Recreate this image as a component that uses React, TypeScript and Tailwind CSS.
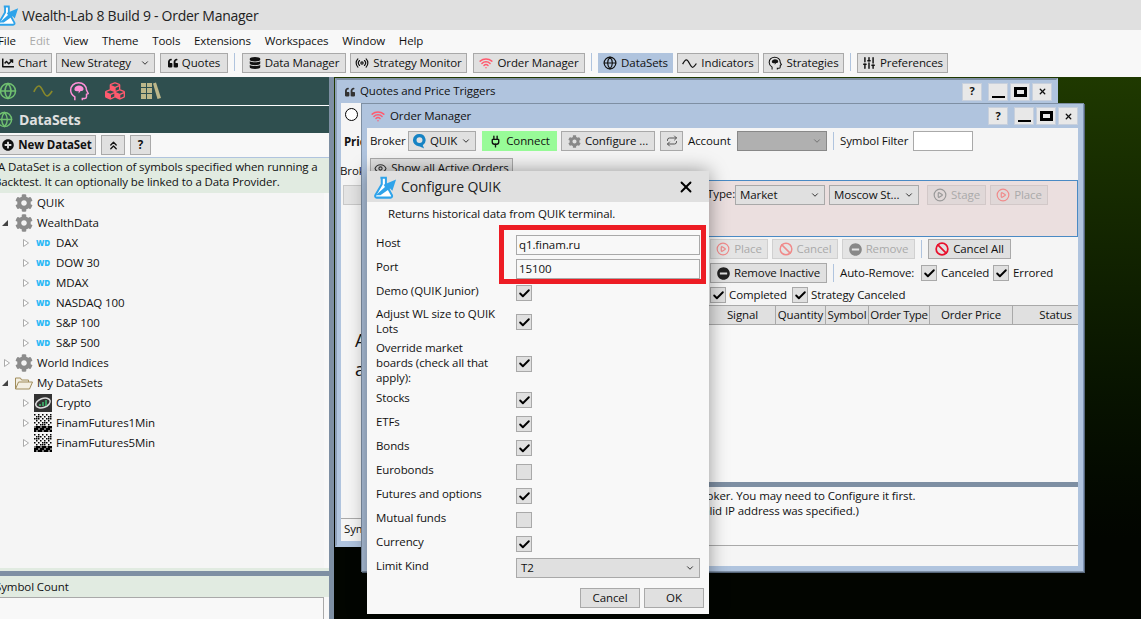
import type { ReactNode } from "react"
import { twMerge } from "tailwind-merge"
import {
  Ban,
  Check,
  ChevronDown,
  ChevronsUp,
  CirclePlay,
  Eye,
  Globe,
  Plug,
  Radio,
  Repeat,
  SlidersVertical,
  Wifi,
  X,
} from "lucide-react"
import { FaCog, FaCubes, FaDatabase, FaMinusCircle, FaPlusCircle, FaQuoteLeft, FaChartLine } from "react-icons/fa"

function Flask({ className }: { className: string }) {
  return (
    <svg viewBox="0 0 26 26" className={className}>
      <path d="M8 3h7M9.500 3v7L2.500 22c-.6 1.200 0 2.500 1.500 2.500h15c1.500 0 2.100-1.300 1.500-2.500L14 10V3" fill="#fff" stroke="#2ea3ea" strokeWidth="2.200" strokeLinejoin="round" />
      <path d="M3 22 13 13l-1.500-2.500L25 5l-4 12-2.500-2.500L8 22z" fill="#2ea3ea" />
    </svg>
  )
}

function Sine({ className }: { className: string }) {
  return (
    <svg viewBox="0 0 24 24" className={className} fill="none" stroke="currentColor" strokeWidth="2">
      <path d="M1 13c2-4 4-7 6-7s3 2 5 6 3 6 5 6 4-3 6-6" />
    </svg>
  )
}

function Head({ className }: { className: string }) {
  return (
    <svg viewBox="0 0 24 24" className={className} fill="none" stroke="currentColor" strokeWidth="1.800">
      <path d="M7 23v-4c-3-2-5-5-5-8 0-5 4-9 9.500-9S21 6 21 11l2 4-2 1v3c0 1-1 2-2 2h-3v2" />
      <path d="M6.500 10c0-3 3-4.500 5.500-4.500s5.500 1.500 5.500 4c0 2-2 2.500-3.500 2.500l-2.500 3v-3c-3 1-5 0-5-2z" fill="currentColor" stroke="none" />
    </svg>
  )
}

function Books({ className }: { className: string }) {
  return (
    <svg viewBox="0 0 20 20" className={className} fill="currentColor">
      <rect x="0" y="2" width="5" height="16" />
      <rect x="6" y="2" width="5" height="16" />
      <path d="M12 2.500 15 1.500 20 17l-3.500 1z" />
      <path d="M0 6h5v1H0zM0 12h5v1H0zM6 6h5v1H6zM6 12h5v1H6z" fill="#2f4f4f" />
    </svg>
  )
}

function QuikLogo() {
  return (
    <svg viewBox="0 0 14 16" className="h-[15px] w-[13px] shrink-0">
      <path d="M7 0a6.500 6.500 0 0 0-1 13c2 .3 4 1.500 6 2.500L10.500 12A6.500 6.500 0 0 0 7 0z" fill="#1583c4" />
      <circle cx="7" cy="6.500" r="3.200" fill="#e0e0e0" />
    </svg>
  )
}

function Btn({ children, className = "" }: { children: ReactNode; className?: string }) {
  return (
    <div className={twMerge("flex h-[20px] shrink-0 items-center justify-center gap-[4px] border border-[#a9a9a9] bg-[#e0e0e0] whitespace-nowrap text-[#111]", className)}>
      {children}
    </div>
  )
}

function Combo({ children, className = "" }: { children?: ReactNode; className?: string }) {
  return (
    <div className={twMerge("flex h-[20px] shrink-0 items-center justify-between border border-[#a9a9a9] bg-[#e0e0e0] pr-[4px] pl-[4px] whitespace-nowrap", className)}>
      <span className="flex items-center gap-[4px]">{children}</span>
      <ChevronDown className="size-[10px]" strokeWidth={2} />
    </div>
  )
}

function Sep() {
  return <div className="h-[18px] w-px shrink-0 bg-[#b0c4de]" />
}

function CheckBox({ on = true }: { on?: boolean }) {
  return (
    <div className="flex size-[16px] shrink-0 items-center justify-center border border-[#a9a9a9] bg-[#e0e0e0]">
      {on && <Check className="size-[13px] text-black" strokeWidth={3.500} />}
    </div>
  )
}

function WinButtons() {
  return (
    <div className="flex items-center">
      <div className="mr-[6px] flex h-[18px] w-[20px] items-center justify-center border border-[#c8d0dc] bg-[#e8e8e8] text-[11px] font-bold">?</div>
      <div className="mr-[2px] flex h-[18px] w-[20px] items-end justify-center border border-[#c8d0dc] bg-[#e8e8e8] pb-[2px]">
        <div className="h-[2px] w-[13px] bg-black" />
      </div>
      <div className="mr-[2px] flex h-[18px] w-[20px] items-center justify-center border border-[#c8d0dc] bg-[#e8e8e8]">
        <div className="h-[10px] w-[13px] border-[3px] border-black" />
      </div>
      <div className="flex h-[18px] w-[20px] items-center justify-center border border-[#c8d0dc] bg-[#e8e8e8]">
        <X className="size-[9px]" strokeWidth={3.500} />
      </div>
    </div>
  )
}

function Triangle({ open = false }: { open?: boolean }) {
  return open ? (
    <svg viewBox="0 0 6 6" className="size-[6px] shrink-0">
      <path d="M0 6h6V0z" fill="#444" />
    </svg>
  ) : (
    <svg viewBox="0 0 6 8" className="h-[8px] w-[6px] shrink-0">
      <path d="M.5.5v7l5-3.500z" fill="#fff" stroke="#aaa" />
    </svg>
  )
}

function Dither() {
  const cells: ReactNode[] = []
  for (let y = 0; y < 18; y += 2) {
    for (let x = 0; x < 18; x += 2) {
      if (y > 11 || (x + y) % 4 === 0 || (x * y) % 6 === 2) {
        cells.push(<rect key={`${x}-${y}`} x={x} y={y} width={y > 11 ? 2 : 1.500} height={y > 11 ? 2 : 1.500} fill={y > 11 && (x + y) % 6 === 0 ? "#777" : "#000"} />)
      }
    }
  }
  return (
    <svg viewBox="0 0 18 18" className="size-[18px] shrink-0">
      {cells}
    </svg>
  )
}

function CryptoIcon() {
  return (
    <svg viewBox="0 0 18 18" className="size-[18px] shrink-0">
      <rect width="18" height="18" fill="#333" />
      <ellipse cx="9" cy="9" rx="7.500" ry="4.500" fill="none" stroke="#ddd" strokeWidth="1.500" transform="rotate(-20 9 9)" />
      <path d="M6 12v-2M9 12V8M12 12V6" stroke="#3fbf6f" strokeWidth="1.500" />
    </svg>
  )
}

function Gear() {
  return <FaCog className="size-[18px] shrink-0 text-[#8c8c8c]" />
}

function WdRow({ name }: { name: string }) {
  return (
    <div className="flex h-[20px] items-center pl-[23px]">
      <Triangle />
      <span className="ml-[7px] w-[20px] shrink-0 text-[8px] leading-none font-extrabold text-[#2ab8f5]">WD</span>
      <span>{name}</span>
    </div>
  )
}

function Tree() {
  return (
    <div className="flex-1 bg-[#f5f5f5]">
      <div className="flex h-[20px] items-center pl-[15px]">
        <Gear />
        <span className="ml-[4px]">QUIK</span>
      </div>
      <div className="flex h-[20px] items-center pl-[2px]">
        <Triangle open />
        <span className="ml-[7px]"><Gear /></span>
        <span className="ml-[4px]">WealthData</span>
      </div>
      {["DAX", "DOW 30", "MDAX", "NASDAQ 100", "S&P 100", "S&P 500"].map((n) => (
        <WdRow key={n} name={n} />
      ))}
      <div className="flex h-[20px] items-center pl-[4px]">
        <Triangle />
        <span className="ml-[5px]"><Gear /></span>
        <span className="ml-[4px]">World Indices</span>
      </div>
      <div className="flex h-[20px] items-center pl-[2px]">
        <Triangle open />
        <svg viewBox="0 0 18 14" className="ml-[7px] h-[14px] w-[18px] shrink-0" fill="#f3efe3" stroke="#a08c5a">
          <path d="M.5 13V2h5l1 2h7v2M.5 13l3-7h14l-3 7z" />
        </svg>
        <span className="ml-[4px]">My DataSets</span>
      </div>
      <div className="flex h-[20px] items-center pl-[23px]">
        <Triangle />
        <span className="ml-[5px]"><CryptoIcon /></span>
        <span className="ml-[4px]">Crypto</span>
      </div>
      <div className="flex h-[20px] items-center pl-[23px]">
        <Triangle />
        <span className="ml-[5px]"><Dither /></span>
        <span className="ml-[4px]">FinamFutures1Min</span>
      </div>
      <div className="flex h-[20px] items-center pl-[23px]">
        <Triangle />
        <span className="ml-[5px]"><Dither /></span>
        <span className="ml-[4px]">FinamFutures5Min</span>
      </div>
    </div>
  )
}

function Sidebar() {
  return (
    <div className="flex h-full w-[334px] shrink-0 border-r-[5px] border-[#7e8fa3] bg-[#f8f8f8]">
      <div className="flex h-full w-full flex-col">
        <div className="flex h-[28px] shrink-0 items-center gap-[16px] bg-[#2f4f4f]">
          <Globe className="ml-[-1px] size-[18px] text-[#70c070]" strokeWidth={2} />
          <Sine className="size-[20px] text-[#8a8a2a]" />
          <Head className="size-[20px] text-[#ff90d8]" />
          <FaCubes className="size-[20px] text-[#ff5a6e]" />
          <Books className="size-[20px] text-[#bdb78a]" />
        </div>
        <div className="flex h-[28px] shrink-0 items-center gap-[6px] border-t border-white bg-[#2f4f4f] text-[14px] font-bold text-[#e0e0e0]">
          <Globe className="ml-[-4px] size-[17px] text-[#70c070]" strokeWidth={2} />
          DataSets
        </div>
        <div className="flex h-[24px] shrink-0 items-center gap-[5px] bg-[#f8f8f8]">
          <Btn className="ml-[-2px] w-[98px] font-bold">
            <FaPlusCircle className="size-[12px]" />
            New DataSet
          </Btn>
          <Btn className="w-[24px]"><ChevronsUp className="size-[13px]" strokeWidth={2.500} /></Btn>
          <Btn className="w-[21px] font-bold">?</Btn>
        </div>
        <div className="h-[36px] shrink-0 border-t border-[#b0c4de] bg-[#e1ebe1] pt-[1px] leading-[15px]">
          <div className="ml-[-2px]">A DataSet is a collection of symbols specified when running a</div>
          <div className="ml-[-6px]">Backtest. It can optionally be linked to a Data Provider.</div>
        </div>
        <div className="flex h-[378px] shrink-0 border-b-[3px] border-[#e1ebe1] pr-[5px]">
          <Tree />
        </div>
        <div className="h-[5px] shrink-0 bg-[#7e8fa3]" />
        <div className="h-[21px] shrink-0 bg-[#e1ebe1] leading-[21px]">
          <div className="ml-[-5px]">Symbol Count</div>
        </div>
        <div className="mr-[5px] flex-1 border-t border-r border-[#a9a9a9] bg-[#f8f8f8]" />
      </div>
    </div>
  )
}

function QuotesWindow() {
  return (
    <div className="absolute top-[1px] left-[1px] flex h-[469px] w-[723px] flex-col border-2 border-t-2 border-[#7e8fa3] border-r-[#b0c4de] border-b-[#b0c4de] border-l-[#8ea0b8] bg-[#b0c4de] px-[4px] pb-[4px]">
      <div className="flex h-[23px] shrink-0 items-center gap-[5px] pl-[4px]">
        <FaQuoteLeft className="size-[10px] text-[#333]" />
        <span className="mb-[2px] flex-1">Quotes and Price Triggers</span>
        <WinButtons />
      </div>
      <div className="flex-1 bg-[#f5f5f5] text-[#111]">
        <div className="mt-[2px] flex items-center">
          <div className="ml-[4px] size-[13px] rounded-full border border-black bg-white" />
          <div className="ml-[4px] h-[18px] w-[8px] border border-[#c8c8c8] bg-[#e4e4e4]" />
        </div>
        <div className="mt-[10px] ml-[3px] font-bold">Price</div>
        <div className="mt-[12px] ml-[-1px]">Broker</div>
        <div className="mt-[5px] ml-[2px] h-[20px] w-[30px] border border-[#c8c8c8] bg-[#e4e4e4]" />
        <div className="mt-[121px] ml-[14px] text-[18px] leading-[29px]">A</div>
        <div className="ml-[14px] text-[18px] leading-[29px]">a</div>
        <div className="mt-[134px] h-[1px] w-full bg-[#a9a9a9]" />
        <div className="mt-[1px] ml-[3px]">Symbol</div>
      </div>
    </div>
  )
}

function OrderManager() {
  return (
    <div className="absolute top-[26px] left-[27px] flex h-[469px] w-[723px] flex-col border border-[#7e8fa3] border-r-[#7e94b4] bg-[#b0c4de] px-[5px] pb-[5px] shadow-[1px_1px_0_#56667a]">
      <div className="flex h-[24px] shrink-0 items-center gap-[5px] pl-[4px]">
        <Wifi className="size-[14px] text-[#ff5a6e]" strokeWidth={2.500} />
        <span className="flex-1">Order Manager</span>
        <WinButtons />
      </div>
      <div className="flex flex-1 flex-col overflow-hidden bg-[#f5f5f5]">
        <div className="flex h-[26px] shrink-0 items-center pl-[3px]">
          <span className="w-[36px]">Broker</span>
          <Combo className="ml-[2px] w-[68px]">
            <QuikLogo />
            QUIK
          </Combo>
          <Btn className="ml-[6px] w-[75px] border-[#98fb98] bg-[#98fb98]">
            <Plug className="size-[13px]" strokeWidth={2.500} />
            Connect
          </Btn>
          <Btn className="ml-[4px] w-[94px]">
            <FaCog className="size-[13px] text-[#888]" />
            Configure ...
          </Btn>
          <Btn className="ml-[5px] w-[23px]"><Repeat className="size-[12px] text-[#555]" /></Btn>
          <span className="ml-[5px] w-[49px]">Account</span>
          <Combo className="w-[90px] border-[#888] bg-[#b0b0b0] text-[#666]" />
          <div className="ml-[6px]"><Sep /></div>
          <span className="ml-[6px] w-[73px]">Symbol Filter</span>
          <div className="h-[20px] w-[60px] border border-[#a9a9a9] bg-white" />
        </div>
        <div className="flex h-[26px] shrink-0 items-start pt-[4px] pl-[3px]">
          <Btn className="w-[143px]">
            <Eye className="size-[13px] text-[#333]" />
            Show all Active Orders
          </Btn>
        </div>
        <div className="flex h-[57px] shrink-0 border border-[#4a8ac4] bg-[#ebdfdf] pt-[4px] pl-[339px]">
          <div className="flex h-[20px] items-center">
            <span className="w-[28px] pb-[3px]">Type:</span>
            <Combo className="w-[90px]">Market</Combo>
            <Combo className="ml-[4px] w-[90px]">Moscow St...</Combo>
            <Btn className="ml-[8px] w-[59px] border-[#d2c8c8] bg-[#e0d8d8] text-[#aaa]">
              <CirclePlay className="size-[14px] text-[#999]" />
              Stage
            </Btn>
            <Btn className="ml-[4px] w-[58px] border-[#d2c8c8] bg-[#e0d8d8] text-[#aaa]">
              <CirclePlay className="size-[14px] text-[#f08a8a]" />
              Place
            </Btn>
          </div>
        </div>
        <div className="flex h-[24px] shrink-0 items-center pl-[343px]">
          <Btn className="w-[58px] border-[#d0d0d0] bg-[#e4e4e4] text-[#aaa]">
            <CirclePlay className="size-[14px] text-[#f08a8a]" />
            Place
          </Btn>
          <Btn className="ml-[4px] w-[66px] border-[#d0d0d0] bg-[#e4e4e4] text-[#aaa]">
            <Ban className="size-[14px] text-[#f08a8a]" strokeWidth={2.500} />
            Cancel
          </Btn>
          <Btn className="ml-[4px] w-[73px] border-[#d0d0d0] bg-[#e4e4e4] text-[#aaa]">
            <FaMinusCircle className="size-[13px] text-[#888]" />
            Remove
          </Btn>
          <div className="ml-[6px]"><Sep /></div>
          <Btn className="ml-[6px] w-[83px]">
            <Ban className="size-[14px] text-[#e8112d]" strokeWidth={3} />
            Cancel All
          </Btn>
        </div>
        <div className="flex h-[24px] shrink-0 items-center pl-[343px]">
          <Btn className="w-[117px]">
            <FaMinusCircle className="size-[13px] text-[#222]" />
            Remove Inactive
          </Btn>
          <div className="ml-[6px]"><Sep /></div>
          <span className="ml-[6px] w-[81px]">Auto-Remove:</span>
          <CheckBox />
          <span className="ml-[4px] w-[52px]">Canceled</span>
          <CheckBox />
          <span className="ml-[4px]">Errored</span>
        </div>
        <div className="flex h-[20px] shrink-0 items-center pl-[343px]">
          <CheckBox />
          <span className="ml-[3px] w-[63px]">Completed</span>
          <CheckBox />
          <span className="ml-[3px]">Strategy Canceled</span>
        </div>
        <div className="flex-1 border-t border-[#a9a9a9] bg-[#f8f8f8]">
          <div className="flex h-[19px] border-b border-[#a9a9a9] bg-[#e0e0e0] pl-[343px] leading-[18px] whitespace-nowrap">
            <div className="w-[66px] border-r border-[#a9a9a9] text-center">Signal</div>
            <div className="w-[50px] border-r border-[#a9a9a9] text-center">Quantity</div>
            <div className="w-[43px] border-r border-[#a9a9a9] text-center">Symbol</div>
            <div className="w-[61px] border-r border-[#a9a9a9] text-center tracking-[-0.3px]">Order Type</div>
            <div className="w-[83px] border-r border-[#a9a9a9] text-center">Order Price</div>
            <div className="w-[64px] pr-[5px] text-right">Status</div>
          </div>
        </div>
        <div className="h-[5px] shrink-0 bg-[#7e8fa3]" />
        <div className="h-[59px] shrink-0 border-b border-[#a9a9a9] bg-[#f8f8f8] pt-[1px] pl-[215px] leading-[15px]">
          <div>Could not connect to Broker. You may need to Configure it first.</div>
          <div className="pl-[94px]">(No valid IP address was specified.)</div>
        </div>
        <div className="h-[20px] shrink-0" />
      </div>
    </div>
  )
}

const rows: { label: string; on: boolean }[] = [
  { label: "Stocks", on: true },
  { label: "ETFs", on: true },
  { label: "Bonds", on: true },
  { label: "Eurobonds", on: false },
  { label: "Futures and options", on: true },
  { label: "Mutual funds", on: false },
  { label: "Currency", on: true },
]

function Dialog() {
  return (
    <div className="absolute top-[171px] left-[367px] flex h-[443px] w-[342px] flex-col bg-[#f8f8f8] shadow-[0_0_18px_rgba(0,0,0,0.4)]">
      <div className="flex h-[31px] shrink-0 items-center bg-[#e0e0e0] pr-[14px] pl-[6px]">
        <Flask className="h-[24px] w-[24px]" />
        <span className="ml-[4px] flex-1 text-[14px] tracking-[-0.1px] text-[#222]">Configure QUIK</span>
        <X className="size-[18px] text-black" strokeWidth={2.500} />
      </div>
      <div className="h-[20px] shrink-0 pl-[21px] leading-[23px]">Returns historical data from QUIK terminal.</div>
      <div className="mt-[11px] flex flex-col px-[9px]">
        <div className="flex h-[24px] items-center">
          <span className="w-[140px] pb-[4px]">Host</span>
          <div className="flex h-[20px] w-[184px] items-center border border-[#a9a9a9] bg-[#f8f8f8] pl-[2px]">q1.finam.ru</div>
        </div>
        <div className="flex h-[24px] items-center">
          <span className="w-[140px] pb-[4px]">Port</span>
          <div className="flex h-[20px] w-[184px] items-center border border-[#a9a9a9] bg-[#f8f8f8] pl-[2px]">15100</div>
        </div>
        <div className="flex h-[24px] items-center">
          <span className="w-[140px] pb-[4px]">Demo (QUIK Junior)</span>
          <CheckBox />
        </div>
        <div className="flex h-[34px] items-center leading-[15px]">
          <span className="w-[140px] pr-[17px] pb-[3px]">Adjust WL size to QUIK Lots</span>
          <CheckBox />
        </div>
        <div className="flex h-[49px] items-center leading-[15px]">
          <span className="w-[140px] pr-[17px] pb-[3px]">Override market boards (check all that apply):</span>
          <CheckBox />
        </div>
        {rows.map((r) => (
          <div key={r.label} className="flex h-[24px] items-center">
            <span className="w-[140px] pb-[4px]">{r.label}</span>
            <CheckBox on={r.on} />
          </div>
        ))}
        <div className="flex h-[24px] items-center">
          <span className="w-[140px] pb-[4px]">Limit Kind</span>
          <Combo className="w-[184px]">T2</Combo>
        </div>
      </div>
      <div className="mt-[8px] flex justify-end gap-[4px] pr-[5px]">
        <Btn className="w-[60px]">Cancel</Btn>
        <Btn className="w-[60px]">OK</Btn>
      </div>
      <div className="absolute top-[54px] left-[132px] h-[59px] w-[207px] border-[5px] border-[#ed1c24]" />
    </div>
  )
}

const tools: { label: string; icon: ReactNode; w: string }[] = [
  { label: "Data Manager", icon: <FaDatabase className="size-[12px]" />, w: "ml-[7px] w-[104px]" },
  { label: "Strategy Monitor", icon: <Radio className="size-[14px]" />, w: "ml-[4px] w-[117px]" },
  { label: "Order Manager", icon: <Wifi className="size-[14px] text-[#ff5a6e]" strokeWidth={2.500} />, w: "ml-[6px] w-[112px]" },
]

export default function App() {
  return (
    <div className="relative h-[619px] w-[1141px] overflow-hidden bg-[#f8f8f8] font-['Open_Sans','Noto_Sans',sans-serif] text-[11.500px] tracking-[-0.1px] text-[#111]">
      <div className="flex h-[30px] items-center bg-[#e0e0e0]">
        <Flask className="ml-[-3px] h-[22px] w-[22px]" />
        <span className="ml-[3px] text-[14px] tracking-[-0.27px] text-[#222]">Wealth-Lab 8 Build 9 - Order Manager</span>
      </div>
      <div className="flex h-[22px] items-center gap-[13.800px]">
        <span className="ml-[-2px]">File</span>
        <span className="text-[#aaa]">Edit</span>
        <span>View</span>
        <span>Theme</span>
        <span>Tools</span>
        <span>Extensions</span>
        <span>Workspaces</span>
        <span>Window</span>
        <span>Help</span>
      </div>
      <div className="flex h-[25px] items-start pt-[1px]">
        <Btn className="ml-[-3px] w-[55px]">
          <FaChartLine className="size-[12px]" />
          Chart
        </Btn>
        <Combo className="ml-[4px] w-[99px]">New Strategy</Combo>
        <Btn className="ml-[5px] w-[68px]">
          <FaQuoteLeft className="size-[10px]" />
          Quotes
        </Btn>
        <div className="ml-[6px]"><Sep /></div>
        {tools.map((t) => (
          <Btn key={t.label} className={t.w}>
            {t.icon}
            {t.label}
          </Btn>
        ))}
        <div className="ml-[6px]"><Sep /></div>
        <Btn className="ml-[6px] w-[75px] border-[#b0c4de] bg-[#b0c4de]">
          <Globe className="size-[14px]" />
          DataSets
        </Btn>
        <Btn className="ml-[4px] w-[82px]">
          <Sine className="size-[15px]" />
          Indicators
        </Btn>
        <Btn className="ml-[4px] w-[81px]">
          <Head className="size-[14px]" />
          Strategies
        </Btn>
        <div className="ml-[6px]"><Sep /></div>
        <Btn className="ml-[6px] w-[91px]">
          <SlidersVertical className="size-[14px]" strokeWidth={2.500} />
          Preferences
        </Btn>
      </div>
      <div className="flex h-[542px]">
        <Sidebar />
        <div className="relative flex-1 bg-linear-to-b from-[#1f3900] to-[#020500] to-[85%]">
          <QuotesWindow />
          <OrderManager />
        </div>
      </div>
      <Dialog />
    </div>
  )
}
